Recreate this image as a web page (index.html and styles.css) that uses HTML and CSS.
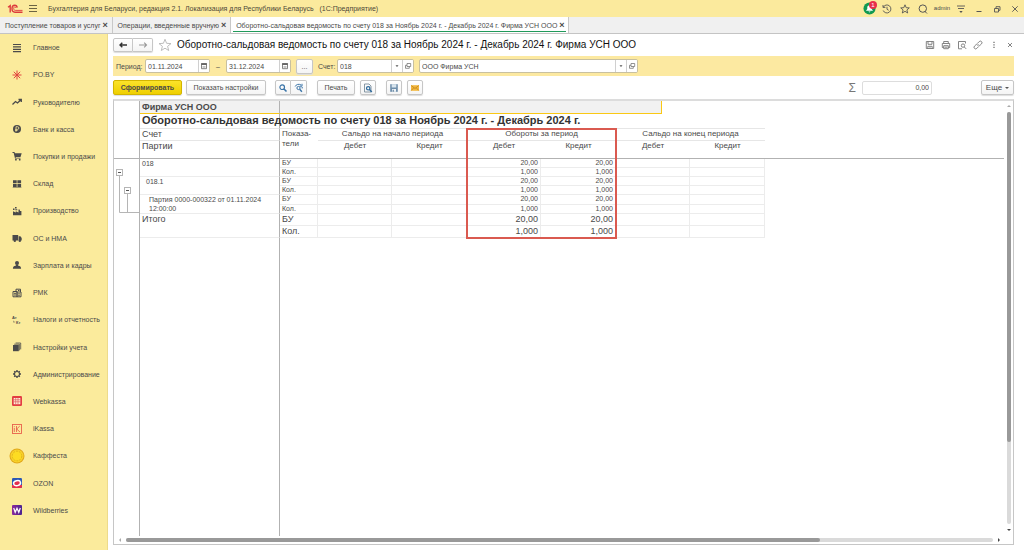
FILE: index.html
```html
<!DOCTYPE html>
<html lang="ru">
<head>
<meta charset="utf-8">
<title>Оборотно-сальдовая ведомость</title>
<link rel="stylesheet" href="styles.css">
</head>
<body>
<header class="titlebar">
  <svg class="logo" viewBox="0 0 16 10" fill="none" stroke="#dd3a3c" stroke-width="1.4"><path d="M1 3.2 3.2 1.6V8.5M3.2 1.2V8.5"/><path d="M10.2 3.6C10 2 9 1.2 7.8 1.2 6 1.2 5 2.7 5 4.6S6.2 8.2 8 8.2H15.5"/><path d="M8.9 3.9C8.7 3.2 8.3 2.9 7.8 2.9 7 2.9 6.7 3.6 6.7 4.6S7.3 6.4 8.2 6.4H15.5" stroke-width=".9"/></svg>
  <button class="plain" aria-label="Меню"><svg class="ico" viewBox="0 0 10 10" stroke="#6b6443" stroke-width="1"><path d="M1 1.500h8M1 4.500h8M1 7.500h8"/></svg></button>
  <div class="app-name">Бухгалтерия для Беларуси, редакция 2.1. Локализация для Республики Беларусь &nbsp; (1С:Предприятие)</div>
  <div class="sys">
    <button class="plain bell" aria-label="Оповещения"><svg viewBox="0 0 14 14"><circle cx="7" cy="7" r="6.5" fill="#119a52"/><path d="M3.200 9.500 4.600 7.600V6c0-1.500 1-2.500 2.400-2.500S9.400 4.500 9.400 6v1.600l1.400 1.900z" fill="#fff"/><path d="M5.800 10.200h2.400L7 11.300z" fill="#fff"/></svg><span class="badge">1</span></button>
    <button class="plain" aria-label="История"><svg class="ico" viewBox="0 0 10 10" fill="none" stroke="#555" stroke-width=".9"><path d="M1.300 3.200A4 4 0 1 1 1.200 6.500M1 1v2.400h2.400M5 2.800v2.500l1.700 1"/></svg></button>
    <button class="plain" aria-label="Избранное"><svg class="ico" viewBox="0 0 10 10" fill="none" stroke="#555" stroke-width=".9"><path d="M5 .8 6.200 3.700l3.100.2-2.400 2 .8 3.100L5 7.300 2.300 9l.8-3.100-2.400-2 3.100-.2z"/></svg></button>
    <button class="plain" aria-label="Поиск"><svg class="ico" viewBox="0 0 10 10" fill="none" stroke="#555" stroke-width="1"><circle cx="4.800" cy="4.600" r="3.700"/><path d="M6.500 7 9 9.500"/></svg></button>
    <button class="plain user">admin</button>
    <button class="plain" aria-label="Сервис"><svg class="ico" viewBox="0 0 10 10" stroke="#555" stroke-width=".9"><path d="M1 2h8M2 4.500h6"/><path d="M3.300 7h3.400L5 9z" fill="#555" stroke="none"/></svg></button>
    <button class="plain" aria-label="Свернуть"><svg class="ico" viewBox="0 0 10 10" stroke="#555"><path d="M2.500 7.500h5"/></svg></button>
    <button class="plain" aria-label="Развернуть"><svg class="ico" viewBox="0 0 10 10" fill="none" stroke="#555" stroke-width=".9"><path d="M2.500 4.500h4v3.500h-4zM4 4.500V2.700h4v3.600H6.500"/></svg></button>
    <button class="plain" aria-label="Закрыть"><svg class="ico" viewBox="0 0 10 10" stroke="#555" stroke-width=".9"><path d="m2.300 2.300 5.400 5.400m0-5.400L2.300 7.700"/></svg></button>
  </div>
</header>

<nav class="tabs">
  <div class="tab"><a href="#">Поступление товаров и услуг</a><button class="plain x" aria-label="Закрыть">×</button></div>
  <div class="tab"><a href="#">Операции, введенные вручную</a><button class="plain x" aria-label="Закрыть">×</button></div>
  <div class="tab active"><a href="#">Оборотно-сальдовая ведомость по счету 018 за Ноябрь 2024 г. - Декабрь 2024 г. Фирма УСН ООО</a><button class="plain x" aria-label="Закрыть">×</button></div>
</nav>

<div class="body">
  <nav class="side">
    <ul>
      <li><a href="#"><svg viewBox="0 0 12 12" stroke="#4a4a4a" stroke-width="1.200"><path d="M2 2.500h8M2 4.900h8M2 7.300h8M2 9.700h8"/></svg>Главное</a></li>
      <li><a href="#"><svg viewBox="0 0 12 12" stroke="#e2453f" stroke-width="1"><path d="M6 1.500v9M1.500 6h9M2.800 2.800l6.400 6.400M9.200 2.800 2.800 9.200"/></svg>PO.BY</a></li>
      <li><a href="#"><svg viewBox="0 0 12 12" fill="none" stroke="#4a4a4a" stroke-width="1.300"><path d="m1.500 8.500 3-3 2 1.500 3.200-3M7.500 3.500h2.800v2.600"/></svg>Руководителю</a></li>
      <li><a href="#"><svg viewBox="0 0 12 12"><circle cx="6" cy="6" r="4" fill="#4a4a4a"/><path d="M5 8.700V3.700h1.500a1.300 1.300 0 0 1 0 2.700H4.200M4.200 7.500h2.300" fill="none" stroke="#fbeb9c" stroke-width=".8"/></svg>Банк и касса</a></li>
      <li><a href="#"><svg viewBox="0 0 12 12" fill="#4a4a4a"><path d="M1.500 2h2l.4 1.200h6.800L9.500 7H4.600l.2.800h4.700v.8H4L2.700 2.900H1.500z"/><circle cx="4.900" cy="9.700" r=".9"/><circle cx="8.700" cy="9.700" r=".9"/></svg>Покупки и продажи</a></li>
      <li><a href="#"><svg viewBox="0 0 12 12" fill="#4a4a4a"><path d="M2 2.300h3.700v3H2zM6.400 2.300h3.700v3H6.400zM2 6h3.700v3H2zM6.400 6h3.700v3H6.400zM1.700 9.400h8.700v.6H1.700z"/></svg>Склад</a></li>
      <li><a href="#"><svg viewBox="0 0 12 12" fill="#4a4a4a"><path d="M2 10.200V6.200l2.800 1.400V6.200l2.700 1.400V4.500h1.200L9 6h1.400v4.200zM2 3.500h1.500V5H2zM4 2h1.600v1.400H4zM4.300 4.200h2V5.300h-2z"/></svg>Производство</a></li>
      <li><a href="#"><svg viewBox="0 0 12 12" fill="#4a4a4a"><path d="M1.500 3h5.700v5.400H1.500zM7.700 4.300h1.700L10.700 6v2.400h-3z"/><circle cx="3.800" cy="8.800" r="1.200"/><circle cx="8.800" cy="8.800" r="1.200"/></svg>ОС и НМА</a></li>
      <li><a href="#"><svg viewBox="0 0 12 12" fill="#4a4a4a"><circle cx="6" cy="3.900" r="2"/><path d="M4.800 5.500h2.400v1.300c2 .3 2.900 1 2.900 2.900H1.900c0-1.900.9-2.600 2.900-2.900z"/></svg>Зарплата и кадры</a></li>
      <li><a href="#"><svg viewBox="0 0 12 12" fill="none" stroke="#4a4a4a" stroke-width="1"><path d="M2 4.500h4v5.300H2zM6 5h4v4.800H6zM5 4.300V2.200h4.500V5M7 3.500h1.500M3 6.300h2M3 8h2M7.200 6.800h1.600M7.200 8.300h1.600"/></svg>РМК</a></li>
      <li><a href="#"><svg viewBox="0 0 12 12" fill="#4a4a4a"><text x="1" y="5" class="glyph">Ат</text><text x="5" y="10" class="glyph">Кт</text><path d="M2.500 6v1.700h1.700v.6H2z"/></svg>Налоги и отчетность</a></li>
      <li><a href="#"><svg viewBox="0 0 12 12" fill="#4a4a4a"><path d="M2 4h5.800v6.200H2z"/><path d="M3.200 3.200h5.200V9.400M4.600 2h5.100v6.400" fill="none" stroke="#4a4a4a" stroke-width=".8"/></svg>Настройки учета</a></li>
      <li><a href="#"><svg viewBox="0 0 12 12" fill="none" stroke="#4a4a4a"><circle cx="6" cy="6" r="2.500" stroke-width="1.100"/><path stroke-width="1.400" d="M6 2v1.400M6 8.600V10M2 6h1.400M8.600 6H10M3.200 3.200l.9.900M7.900 7.900l.9.900M8.800 3.200l-.9.900M4.100 7.900l-.9.900"/></svg>Администрирование</a></li>
      <li><a href="#"><svg viewBox="0 0 12 12"><rect x="1" y="1" width="10" height="10" rx="1.200" fill="#e33d42"/><path d="M2.700 3h6.600v6.200H2.700z" fill="#fff0d8"/><path d="M2.700 4.800h6.600M2.700 6.800h6.600M4.700 3v6.200M7 3v6.200" stroke="#e0565a" stroke-width=".7"/></svg>Webkassa</a></li>
      <li><a href="#"><svg viewBox="0 0 12 12" fill="none" stroke="#e8624c" stroke-width=".9"><rect x="1.500" y="1.500" width="9" height="9"/><path d="M3.300 4.800V9M3.300 3v.8M5.500 3v6M8.800 3 5.700 6l3.300 3"/></svg>iKassa</a></li>
      <li><a href="#"><svg class="big" viewBox="0 0 16 16"><circle cx="8" cy="8" r="7.500" fill="#e0a81c"/><circle cx="8" cy="8" r="6.500" fill="#f9d32b"/><circle cx="8" cy="8" r="4.800" fill="#fddc22" stroke="#d9a81a" stroke-width=".7" stroke-dasharray="2 1"/></svg>Каффеста</a></li>
      <li><a href="#"><svg viewBox="0 0 12 12"><rect x="1" y="1" width="10" height="10" rx="1.200" fill="#2b58b5"/><path d="M1 8h10v1.800A1.200 1.200 0 0 1 9.800 11H2.200A1.200 1.200 0 0 1 1 9.800z" fill="#e5304d"/><ellipse cx="6" cy="6.200" rx="3.500" ry="2.500" fill="#e5304d" stroke="#fff" stroke-width="1.500" transform="rotate(-12 6 6)"/></svg>OZON</a></li>
      <li><a href="#"><svg viewBox="0 0 12 12"><defs><linearGradient id="wb" x1="0" x2="1"><stop offset="0" stop-color="#8b2a9c"/><stop offset="1" stop-color="#4b2390"/></linearGradient></defs><rect x="1" y="1" width="10" height="10" rx="1" fill="url(#wb)"/><path d="m2.700 4 1.500 4.300L6 4.300l1.800 4L9.300 4" fill="none" stroke="#fff" stroke-width="1.200"/></svg>Wildberries</a></li>
    </ul>
  </nav>

  <main class="main">
    <div class="head">
      <div class="group">
        <button class="btn arrow" aria-label="Назад"><svg class="ico" viewBox="0 0 10 10" fill="none" stroke="#333" stroke-width="1.400"><path d="M9 5H2M4.300 2.700 2 5l2.300 2.300"/></svg></button><button class="btn arrow" aria-label="Вперед"><svg class="ico" viewBox="0 0 10 10" fill="none" stroke="#999" stroke-width="1.100"><path d="M1 5h7.500M6.200 2.700 8.500 5 6.200 7.300"/></svg></button>
      </div>
      <button class="plain star" aria-label="В избранное"><svg viewBox="0 0 14 14" fill="none" stroke="#b5b5b5" stroke-width=".9"><path d="M7 1.300 8.600 5.300l4.400.3-3.400 2.700 1.100 4.200L7 10.200l-3.700 2.300 1.100-4.200L1 5.600l4.400-.3z"/></svg></button>
      <h1>Оборотно-сальдовая ведомость по счету 018 за Ноябрь 2024 г. - Декабрь 2024 г. Фирма УСН ООО</h1>
      <div class="tools">
        <button class="plain" aria-label="Сохранить"><svg class="ico" viewBox="0 0 10 10" fill="none" stroke="#777" stroke-width=".9"><path d="M1.300 1.500h7.400v7H1.300zM3 1.500v2.800h4V1.500M2.800 8.500V6.300h4.400v2.200M4.500 7.300h1"/></svg></button>
        <button class="plain" aria-label="Печать"><svg class="ico" viewBox="0 0 10 10" fill="none" stroke="#777" stroke-width=".9"><path d="M2.700 3.500v-2h4.600v2M2.700 7.500H1.300v-4h7.400v4H7.300M2.700 5.700h4.600v3H2.700zM3.500 7.200h3"/></svg></button>
        <button class="plain" aria-label="Просмотр"><svg class="ico" viewBox="0 0 10 10" fill="none" stroke="#777" stroke-width=".9"><path d="M8.500 3.500v-2h-7v7.300H5"/><circle cx="6" cy="5.600" r="1.700"/><path d="m7.300 7 1.900 1.900"/></svg></button>
        <button class="plain" aria-label="Ссылка"><svg class="ico" viewBox="0 0 10 10" fill="none" stroke="#777" stroke-width=".9"><path d="M4.800 3 6.200 1.600a1.600 1.600 0 0 1 2.300 2.300L6.800 5.500a1.600 1.600 0 0 1-2.300 0M5.200 7 3.800 8.400a1.600 1.600 0 0 1-2.300-2.300l1.700-1.600a1.600 1.600 0 0 1 2.300 0"/></svg></button>
        <button class="plain" aria-label="Ещё"><svg class="ico" viewBox="0 0 10 10" fill="#666"><path d="M4.400 1.700h1.200v1.300H4.400zM4.400 4.200h1.200v1.300H4.400zM4.400 6.700h1.200V8H4.400z"/></svg></button>
        <button class="plain" aria-label="Закрыть"><svg class="ico" viewBox="0 0 10 10" stroke="#666" stroke-width=".8"><path d="m3 3 4 4m0-4L3 7"/></svg></button>
      </div>
    </div>

    <form class="filter">
      <label class="period" for="from">Период:</label>
      <div class="field date"><input id="from" value="01.11.2024"><button type="button" aria-label="Календарь"><svg viewBox="0 0 8 8"><path d="M1.500 1.500h5v5.200h-5z" fill="none" stroke="#777" stroke-width=".9"/><path d="M1.200 1.200h5.600v1.800H1.200z" fill="#666"/><path d="M2.500 4.500h3M2.500 5.600h3" stroke="#999" stroke-width=".6"/></svg></button></div>
      <label class="dash" for="to">–</label>
      <div class="field date"><input id="to" value="31.12.2024"><button type="button" aria-label="Календарь"><svg viewBox="0 0 8 8"><path d="M1.500 1.500h5v5.200h-5z" fill="none" stroke="#777" stroke-width=".9"/><path d="M1.200 1.200h5.600v1.800H1.200z" fill="#666"/><path d="M2.500 4.500h3M2.500 5.600h3" stroke="#999" stroke-width=".6"/></svg></button></div>
      <button type="button" class="btn dots">...</button>
      <label class="acc" for="account">Счет:</label>
      <div class="field account"><input id="account" value="018"><button type="button" aria-label="Выбрать"><svg viewBox="0 0 8 8"><path d="M2.500 3.300h3L4 5z" fill="#555"/></svg></button><button type="button" aria-label="Открыть"><svg viewBox="0 0 8 8" fill="none" stroke="#777" stroke-width=".8"><path d="M3 1.500h3.700v3H3zM3 3.300H1.500v3h3.800V4.500"/></svg></button></div>
      <div class="field firm"><input aria-label="Организация" value="ООО Фирма УСН"><button type="button" aria-label="Выбрать"><svg viewBox="0 0 8 8"><path d="M2.500 3.300h3L4 5z" fill="#555"/></svg></button><button type="button" aria-label="Открыть"><svg viewBox="0 0 8 8" fill="none" stroke="#777" stroke-width=".8"><path d="M3 1.500h3.700v3H3zM3 3.300H1.500v3h3.800V4.500"/></svg></button></div>
    </form>

    <div class="actions">
      <button class="btn primary">Сформировать</button>
      <button class="btn settings">Показать настройки</button>
      <div class="group find">
        <button class="btn sq" aria-label="Найти"><svg class="ico" viewBox="0 0 10 10" fill="none" stroke="#3a74a8" stroke-width="1.200"><circle cx="4.200" cy="4.200" r="2.300"/><path d="m6 6 2.500 2.500" stroke-width="1.600"/></svg></button><button class="btn sq" aria-label="Найти далее"><svg class="ico" viewBox="0 0 10 10" fill="none" stroke="#3a74a8" stroke-width="1"><circle cx="4.500" cy="5" r="1.600"/><path d="m5.700 6.300 2.200 2.400" stroke-width="1.400"/><path d="M1.200 3.500C2 1.300 5 .6 7 2M8 .8v2.400H5.700M7.500 4.800H9"/></svg></button>
      </div>
      <button class="btn print">Печать</button>
      <button class="btn sq preview" aria-label="Предварительный просмотр"><svg class="ico" viewBox="0 0 10 10" fill="none"><path d="M1.500 1h4.500l2 2v6H1.500z" stroke="#7b8d9b" stroke-width=".9"/><circle cx="5.200" cy="5.300" r="1.700" stroke="#2e6a9c" stroke-width="1.200"/><path d="m6.500 6.600 2.300 2.300" stroke="#2e6a9c" stroke-width="1.400"/></svg></button>
      <button class="btn sq save" aria-label="Сохранить"><svg class="ico" viewBox="0 0 10 10"><path d="M1.200 1.200h7.600v7.600H1.200z" fill="#6f8fac"/><path d="M2.700 1.200h4.600v3.300H2.700z" fill="#d9e5ee"/><path d="M3 6h4v2.800H3z" fill="#eef3f7"/><path d="M3.700 6.700h1v2h-1z" fill="#4a6d8e"/></svg></button>
      <button class="btn sq" aria-label="Отправить"><svg class="ico" viewBox="0 0 10 10"><path d="M1 2.200h8v5.600H1z" fill="#f3b83e"/><path d="m1.200 2.500 3.800 3 3.800-3M1.200 7.500l2.600-2.700M8.800 7.500 6.200 4.800" fill="none" stroke="#b97d1b" stroke-width=".7"/></svg></button>
      <label class="sigma" for="sum">Σ</label>
      <input class="sum" id="sum" value="0,00">
      <button class="btn more">Еще <span class="caret"></span></button>
    </div>

    <section class="report">
      <div class="sheet">
        <table>
          <colgroup><col class="c-tree"><col class="c-name"><col class="c-ind"><col class="c-num"><col class="c-alt"><col class="c-num"><col class="c-alt"><col class="c-num"><col class="c-alt"><col></colgroup>
          <thead>
            <tr class="r-firm"><td></td><th class="edge firm-name">Фирма УСН ООО</th><td colspan="8" class="picked"><div></div></td></tr>
            <tr class="r-title"><td></td><th colspan="9"><h2>Оборотно-сальдовая ведомость по счету 018 за Ноябрь 2024 г. - Декабрь 2024 г.</h2></th></tr>
            <tr class="r-head"><td></td><th class="edge big">Счет</th><th rowspan="2" class="ind">Показа-<br>тели</th><th colspan="2">Сальдо на начало периода</th><th colspan="2" class="marked">Обороты за период<span class="frame"></span></th><th colspan="2">Сальдо на конец периода</th><td></td></tr>
            <tr class="r-sub"><td></td><th class="edge big">Партии</th><th>Дебет</th><th>Кредит</th><th>Дебет</th><th>Кредит</th><th>Дебет</th><th>Кредит</th><td></td></tr>
          </thead>
          <tbody>
            <tr><td rowspan="6" class="tree"><svg viewBox="0 0 25 54" fill="none" stroke="#b5b5b5"><path d="M5.500 16v37.500H25M13.500 35v18.500"/><rect x="2.500" y="10.500" width="6" height="6" fill="#fff"/><rect x="10.500" y="28.500" width="6" height="6" fill="#fff"/><path d="M4 13.500h3M12 31.500h3" stroke="#555"/></svg></td><td rowspan="2" class="edge name">018</td><td class="ind">БУ</td><td></td><td></td><td>20,00</td><td>20,00</td><td></td><td></td><td class="rest" rowspan="8"></td></tr>
            <tr><td class="ind">Кол.</td><td></td><td></td><td>1,000</td><td>1,000</td><td></td><td></td></tr>
            <tr><td rowspan="2" class="edge name l2">018.1</td><td class="ind">БУ</td><td></td><td></td><td>20,00</td><td>20,00</td><td></td><td></td></tr>
            <tr><td class="ind">Кол.</td><td></td><td></td><td>1,000</td><td>1,000</td><td></td><td></td></tr>
            <tr><td rowspan="2" class="edge name l3">Партия 0000-000322 от 01.11.2024 12:00:00</td><td class="ind">БУ</td><td></td><td></td><td>20,00</td><td>20,00</td><td></td><td></td></tr>
            <tr><td class="ind">Кол.</td><td></td><td></td><td>1,000</td><td>1,000</td><td></td><td></td></tr>
            <tr class="total"><td rowspan="2" class="tree"></td><td rowspan="2" class="edge name">Итого</td><td class="ind">БУ</td><td></td><td></td><td>20,00</td><td>20,00</td><td></td><td></td></tr>
            <tr class="total"><td class="ind">Кол.</td><td></td><td></td><td>1,000</td><td>1,000</td><td></td><td></td></tr>
            <tr class="blank"><td></td><td class="edge"></td><td colspan="8"></td></tr>
          </tbody>
        </table>
      </div>
      <div class="vbar"><i class="tri up"></i><div class="track"><div class="thumb"></div></div><i class="tri down"></i></div>
      <div class="hbar"><i class="tri left"></i><div class="track"><div class="thumb"></div></div><i class="tri right"></i></div>
    </section>
  </main>
</div>
</body>
</html>
```

FILE: styles.css
```css
* { box-sizing: border-box; }
html, body { height: 100%; }
body {
  margin: 0;
  display: flex;
  flex-direction: column;
  font: 7px/9px "Liberation Sans", Arial, sans-serif;
  color: #4a4a4a;
  background: #fff;
}
button, input { font: inherit; color: inherit; margin: 0; padding: 0; }
svg { display: block; flex: none; }
a { color: inherit; text-decoration: none; }
h1, h2 { margin: 0; }
.plain { border: 0; background: none; display: flex; align-items: center; justify-content: center; }
.ico { width: 10px; height: 10px; }

/* Title bar */
.titlebar { display: flex; align-items: center; height: 17px; flex: none; padding-left: 7px; background: #fbea9d; }
.logo { width: 16px; height: 10px; margin-right: 5px; }
.app-name { flex: 1; margin-left: 10px; color: #4c4839; white-space: nowrap; }
.sys { display: flex; align-items: center; }
.sys .plain { width: 18px; height: 16px; }
.bell { position: relative; }
.bell svg { width: 13px; height: 13px; }
.badge {
  position: absolute; top: 0; right: 1px;
  width: 8px; height: 8px; border-radius: 4px;
  background: #e8304a; color: #fff; font-size: 6px; line-height: 8px;
}
.sys .user { width: 20px; font-size: 6px; }

/* Open windows */
.tabs { display: flex; flex: none; height: 17px; background: #f0f0f0; border-bottom: 1px solid #c4c4c4; }
.tab { display: flex; align-items: center; padding: 0 2px 0 5px; border-right: 1px solid #c8c8c8; white-space: nowrap; }
.tab .x { width: 9px; font-size: 9px; font-weight: bold; }
.tab.active { background: linear-gradient(#219a5b, #219a5b) 2px 14px / calc(100% - 4px) 1px no-repeat #fff; }

.body { display: flex; flex: 1; min-height: 0; }

/* Sections */
.side { display: flex; width: 108px; flex: none; background: #fbeb9c; border-right: 1px solid #eddb8b; padding-bottom: 26px; }
.side ul { display: flex; flex-direction: column; flex: 1; margin: 0; padding: 0; list-style: none; }
.side li { display: flex; flex: 1; max-height: 28px; }
.side a { display: grid; grid-template-columns: 16px 1fr; column-gap: 8px; align-items: center; padding-left: 9px; white-space: nowrap; }
.side svg { width: 12px; height: 12px; justify-self: center; }
.side .big { width: 16px; height: 16px; }
.glyph { font: bold 4px "Liberation Sans", Arial, sans-serif; }

/* Form header */
.main { display: flex; flex-direction: column; flex: 1; min-width: 0; padding: 0 10px 5px 5px; }
.head { display: flex; align-items: center; height: 22px; flex: none; }
.group { display: flex; }
.group .btn:first-child { border-radius: 2px 0 0 2px; }
.group .btn:last-child { border-radius: 0 2px 2px 0; border-left: 0; }
.btn {
  display: flex; align-items: center; justify-content: center;
  height: 15px; border: 1px solid #c6c6c6; border-radius: 2px;
  background: linear-gradient(#fff, #f4f4f4); box-shadow: 0 1px 1px #ddd; white-space: nowrap;
}
.arrow { width: 20px; height: 14px; }
.star { width: 14px; margin: 0 5px; }
.star svg { width: 14px; height: 14px; }
h1 { font-size: 10px; line-height: 14px; font-weight: normal; color: #111; white-space: nowrap; }
.tools { display: flex; margin-left: auto; margin-right: -4px; }
.tools .plain { width: 16px; }

/* Filter */
.filter { display: flex; align-items: center; height: 20px; flex: none; padding-left: 3px; background: #fce9a1; }
.period { width: 29px; }
.dash { width: 16px; text-align: center; }
.field { display: flex; height: 14px; border: 1px solid #c8c0a0; border-radius: 2px; background: #fff; overflow: hidden; }
.field input { flex: 1; min-width: 0; border: 0; padding-left: 2px; background: none; outline: 0; }
.field button { display: flex; align-items: center; justify-content: center; width: 11px; border: 0; border-left: 1px solid #d0d0d0; background: #fff; }
.field svg { width: 8px; height: 8px; }
.date { width: 65px; }
.dots { width: 17px; margin-left: 5px; }
.acc { margin-left: 5px; width: 19px; }
.account { width: 77px; margin-right: 5px; }
.firm { width: 219px; }

/* Commands */
.actions { display: flex; align-items: center; height: 23px; flex: none; }
.primary { width: 69px; background: linear-gradient(#fbe32a, #efcf00); border-color: #d3b500; font-weight: bold; }
.settings { width: 80px; margin-left: 4px; }
.sq { width: 16px; }
.find { margin-left: 9px; }
.print { width: 38px; margin: 0 5px 0 10px; }
.save { margin: 0 5px 0 10px; }
.sigma { margin-left: auto; font-size: 12px; line-height: 14px; color: #777; }
.sum { width: 70px; height: 14px; margin: 0 49px 0 6px; padding-right: 2px; border: 1px solid #ddd; border-radius: 2px; text-align: right; }
.more { width: 33px; gap: 3px; font-size: 8px; }
.caret { border: 2px solid transparent; border-top-color: #555; border-bottom: 0; }

/* Report */
.report {
  display: grid; grid-template: minmax(0, 1fr) 8px / minmax(0, 1fr) 9px;
  flex: 1; min-height: 0; border: 1px solid #c6c6c6; border-top: 2px solid #dcdcdc;
}
.sheet { grid-area: 1 / 1; overflow: hidden; }
table { width: 100%; height: 100%; table-layout: fixed; border-collapse: separate; border-spacing: 0; }
.c-tree { width: 26px; }
.c-name { width: 140px; }
.c-ind { width: 38px; }
.c-num { width: 74px; }
.c-alt { width: 75px; }
th, td { padding: 0; font-weight: normal; vertical-align: top; overflow: hidden; }
tr > td.tree, .r-firm > td:first-child, .r-title > td:first-child, .r-head > td:first-child,
.r-sub > td:first-child, .blank > td:first-child, .edge { border-right: 1px solid #b2b2b2 !important; }
.r-firm { height: 13px; }
.r-firm th, .picked div { background: #f1f1f1; border-bottom: 1px solid #fac814; }
.picked div { width: 382px; height: 13px; border-right: 1px solid #fac814; }
.firm-name { padding-left: 2px; text-align: left; font-size: 9px; line-height: 12px; font-weight: bold; }
.r-title { height: 14px; }
.r-title th { background: linear-gradient(#b2b2b2, #b2b2b2) 139px 0 / 1px 100% no-repeat; }
h2 { padding-left: 2px; text-align: left; font-size: 11px; line-height: 13px; color: #333; white-space: nowrap; }
.r-head { height: 12px; }
.r-sub { height: 19px; }
.r-head th, .r-sub th { font-size: 8px; line-height: 10px; }
.r-head th { border-top: 1px solid #e6e6e6; }
.r-sub > * { border-bottom: 1px solid #b2b2b2; }
.r-sub th { border-top: 1px solid #e6e6e6; }
.r-head .ind { border-bottom: 1px solid #b2b2b2; padding-left: 2px; text-align: left; }
.r-head .big, .r-sub .big { padding-left: 2px; text-align: left; font-size: 9px; line-height: 11px; }
.marked { position: relative; overflow: visible; }
.frame { position: absolute; z-index: 1; top: -1px; left: -1px; right: -1px; height: 111px; border: 2px solid #da5a50; }
tbody tr { height: 9px; }
tbody td { height: 9px; line-height: 8px; text-align: right; padding-right: 2px; border-right: 1px solid #ececec; border-bottom: 1px solid #ececec; }
tbody .ind, tbody .name { text-align: left; padding-left: 2px; }
tbody .name { line-height: 9px; }
tbody .l2 { padding-left: 6px; }
tbody .l3 { padding-left: 9px; }
tbody .tree { padding: 0; border-bottom: 0; }
.tree svg { width: 25px; height: 54px; }
tbody .rest { border: 0; }
tbody .total, tbody .total td { height: 12px; }
.total td { font-size: 9px; line-height: 11px; }
tbody .blank { height: auto; }
tbody .blank td { height: auto; border: 0; }

/* Scroll bars */
.vbar { display: flex; flex-direction: column; align-items: center; grid-area: 1 / 2; padding: 4px 0 5px; }
.hbar { display: flex; align-items: center; grid-area: 2 / 1; padding: 0 4px 0 5px; }
.track { flex: 1; background: #dadada; border-radius: 2px; }
.thumb { background: #999; border-radius: 2px; }
.vbar .track { width: 4px; margin: 5px 0; }
.vbar .thumb { height: 80%; }
.hbar .track { height: 4px; margin: 0 5px; }
.hbar .thumb { width: 80%; height: 4px; }
.tri { border: 2px solid transparent; }
.up { border-bottom-color: #aaa; border-top: 0; }
.down { border-top-color: #444; border-bottom: 0; }
.left { border-right-color: #aaa; border-left: 0; }
.right { border-left-color: #444; border-right: 0; }
```
